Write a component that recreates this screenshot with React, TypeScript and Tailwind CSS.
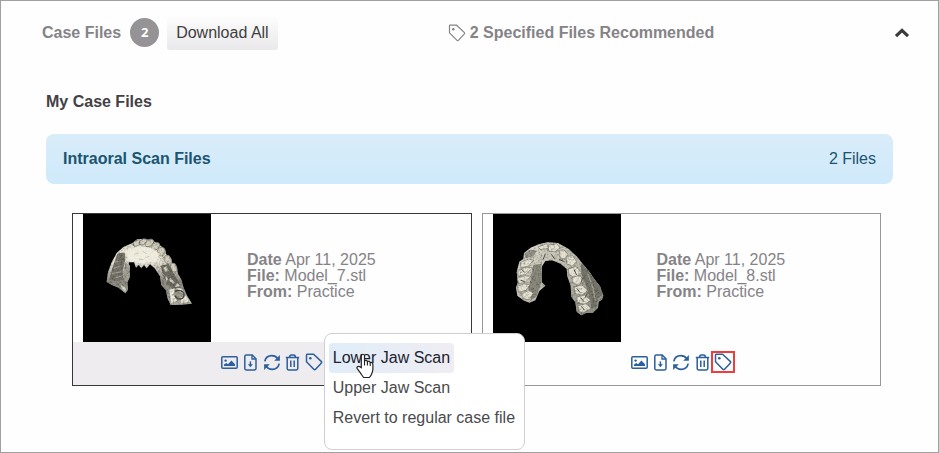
import type { ReactNode } from "react";

function TagIcon({ weight }: { weight: number }) {
  return (
    <svg viewBox="0 0 18 18" className="size-[18px] shrink-0" aria-hidden="true" fill="none" stroke="currentColor" strokeWidth={weight} strokeLinejoin="round">
      <path d="M2.2 1.2H8.6L16.2 8.4C16.8 9 16.8 9.6 16.2 10.2L10.6 16.2C10 16.8 9.4 16.8 8.8 16.2L1.5 8.8V2Q1.5 1.2 2.2 1.2Z" />
      <circle cx="5.3" cy="5.2" r="1.3" fill="currentColor" stroke="none" />
    </svg>
  );
}

function PictureIcon() {
  return (
    <svg viewBox="0 0 17 13" className="h-[13px] w-[17px]" aria-hidden="true">
      <rect x="0.8" y="0.8" width="15.4" height="11.4" rx="1" fill="none" stroke="currentColor" strokeWidth="1.5" />
      <circle cx="4.6" cy="4.6" r="1.2" fill="currentColor" />
      <path d="M3 10V8.6L5.4 7 7 8.2 10.4 4.6 14 8.2V10Z" fill="currentColor" />
    </svg>
  );
}

function FileDownIcon() {
  return (
    <svg viewBox="0 0 13 17" className="h-[17px] w-[13px]" aria-hidden="true" fill="none" stroke="currentColor" strokeWidth="1.5">
      <path d="M2.2 1H8.2L12 4.8V14.6A1.4 1.4 0 0 1 10.6 16H2.2A1.4 1.4 0 0 1 .8 14.6V2.4A1.4 1.4 0 0 1 2.2 1Z" />
      <path d="M8 1V5H12" strokeWidth="1.3" />
      <path d="M6.4 7.4V11" />
      <path d="M3.9 10.2H8.9L6.4 13.2Z" fill="currentColor" stroke="none" />
    </svg>
  );
}

function SyncIcon() {
  return (
    <svg viewBox="0 0 18 17" className="h-[17px] w-[18px] shrink-0" aria-hidden="true" fill="none" stroke="currentColor" strokeWidth="1.7">
      <path d="M1.8 7.4C2.6 3.8 5.6 1.7 8.8 1.7C11.4 1.7 13.5 2.8 14.9 4.8" />
      <path d="M16.2 9.6C15.4 13.2 12.4 15.3 9.2 15.3C6.6 15.3 4.5 14.2 3.1 12.2" />
      <path d="M16.9 1V6.7H11.2Z" fill="currentColor" stroke="none" />
      <path d="M1.1 16V10.3H6.8Z" fill="currentColor" stroke="none" />
    </svg>
  );
}

function TrashIcon() {
  return (
    <svg viewBox="0 0 15 17" className="h-[17px] w-[15px]" aria-hidden="true" fill="none" stroke="currentColor" strokeWidth="1.5">
      <path d="M.8 3.5H14.2" />
      <path d="M4.6 3.3C4.6 1.8 5.4 1 6.4 1H8.6C9.6 1 10.4 1.8 10.4 3.3" />
      <path d="M2.2 3.8V14.6A1.4 1.4 0 0 0 3.6 16H11.4A1.4 1.4 0 0 0 12.8 14.6V3.8" />
      <path d="M5.8 6.4V13M9.2 6.4V13" />
    </svg>
  );
}

function ChevronUp() {
  return (
    <svg viewBox="0 0 16 10" className="h-[10px] w-4" aria-hidden="true">
      <path d="M2 8.2 8 2.4 14 8.2" fill="none" stroke="currentColor" strokeWidth="3.2" />
    </svg>
  );
}

function HandCursor() {
  return (
    <svg viewBox="0 0 18 26" className="pointer-events-none absolute left-[31px] top-[19px] h-[26px] w-[18px]" aria-hidden="true">
      <path
        d="M5.3 14.8V3.2C5.3 .6 8.5 .6 8.5 3.2V8.2C9.2 7 11.2 7.2 11.4 8.8 12.3 7.8 14 8.2 14.2 9.7 15.4 9 16.9 9.9 16.9 11.4V16C16.9 19 15.8 20 15 22.4L13.4 24.5H7.6L5.8 22C4.4 19.6 2.7 17.6 1.2 15.6 .4 14.2 1.9 12.8 3.4 13.5Z"
        fill="#fff"
        stroke="#222"
        strokeWidth="1.2"
        strokeLinejoin="round"
      />
      <path d="M8.5 8V12.5M11.4 9V12.5M14.2 10V13" fill="none" stroke="#222" strokeWidth="1.1" />
    </svg>
  );
}

/* Mottled plaster surface shared by both scan models. */
function Plaster({ id }: { id: string }) {
  return (
    <filter id={id} x="0" y="0" width="1" height="1">
      <feTurbulence type="fractalNoise" baseFrequency="0.16" numOctaves="2" seed="4" result="noise" />
      <feColorMatrix in="noise" type="matrix" values="1.4 0 0 0 0.2  1.4 0 0 0 0.2  1.4 0 0 0 0.2  0 0 0 0 1" result="grain" />
      <feBlend in="SourceGraphic" in2="grain" mode="multiply" result="mixed" />
      <feComposite in="mixed" in2="SourceGraphic" operator="in" />
    </filter>
  );
}

function UpperArch() {
  return (
    <svg viewBox="69 41 384 384" className="size-32 shrink-0 bg-black" role="img" aria-label="Scan model 7">
      <defs>
        <Plaster id="plasterA" />
        <linearGradient id="archA" x1="0" y1="0" x2="0" y2="1">
          <stop offset="0" stopColor="#dedbca" />
          <stop offset="0.35" stopColor="#e8e5d6" />
          <stop offset="0.65" stopColor="#8d8b80" />
          <stop offset="1" stopColor="#aeaca0" />
        </linearGradient>
      </defs>
      <g filter="url(#plasterA)">
        <path
          d="M140 245 144 216 155 186 170 158 190 140 218 128 232 117 250 116 276 120 296 132 314 146 318 162 332 172 336 190 350 200 354 220 364 238 370 260 380 284 396 310 362 313 332 314 322 292 318 270 304 254 300 228 284 204 270 192 260 204 252 194 244 204 236 194 228 202 222 186 206 186 210 230 202 246 204 268 196 279 176 262 156 254Z"
          fill="url(#archA)"
        />
        <path d="M172 160 194 154 196 178 188 212 190 238 174 242 148 240 156 206Z" fill="#77756b" />
        <path d="M196 184 210 196 206 234 198 250 190 216Z" fill="#a5a397" />
        <g fill="#d3d0bf" stroke="#77756a" strokeWidth="2">
          <ellipse cx="231" cy="128" rx="13" ry="8" transform="rotate(-28 231 128)" />
          <ellipse cx="249" cy="125" rx="12" ry="8" transform="rotate(-25 249 125)" />
          <ellipse cx="268" cy="128" rx="14" ry="9" transform="rotate(-32 268 128)" />
          <ellipse cx="286" cy="138" rx="14" ry="10" transform="rotate(-34 286 138)" />
          <ellipse cx="304" cy="154" rx="12" ry="13" />
          <ellipse cx="323" cy="178" rx="10" ry="14" transform="rotate(-24 323 178)" />
          <ellipse cx="341" cy="202" rx="9" ry="14" transform="rotate(-18 341 202)" />
        </g>
        <path d="M302 196 326 190 340 218 354 240 364 264 338 266 320 250 308 224Z" fill="#6f6d63" />
        <path d="M310 202 320 198 326 212 316 214ZM330 232 344 246 340 250 328 242ZM316 224 324 236 318 246ZM344 260 352 248 362 258Z" fill="#d0cec0" />
        <g fill="#eceadb">
          <path d="M328 268 344 264 340 284 352 302 334 308ZM362 292 378 286 390 304 364 308ZM348 264 366 264 372 280 360 274Z" />
          <path d="M182 254 198 262 196 274 186 266Z" opacity="0.7" />
        </g>
        <path d="M346 274C356 266 374 272 372 286S350 298 346 286" fill="none" stroke="#4b4a42" strokeWidth="4" />
        <path d="M164 186 178 182M160 204 180 198M156 220 184 214M166 232 188 226M202 196 194 206M206 212 196 220M290 196 306 208M306 172 318 184M300 214 316 228" stroke="#a6a497" strokeWidth="3" fill="none" />
      </g>
      <path d="M180 156 206 146 240 138 276 144 298 160 290 184 268 184 246 190 206 182 198 158Z" fill="#f3f0e2" opacity="0.8" />
      <path d="M222 162 236 158M248 154 260 160M256 172 268 168M236 176 250 178" fill="none" stroke="#b9b7a6" strokeWidth="2" />
    </svg>
  );
}

function LowerArch() {
  return (
    <svg viewBox="39 41 384 384" className="size-32 shrink-0 bg-black" role="img" aria-label="Scan model 8">
      <defs>
        <Plaster id="plasterB" />
        <linearGradient id="archB" x1="0" y1="0" x2="1" y2="1">
          <stop offset="0" stopColor="#e0decf" />
          <stop offset="0.55" stopColor="#b9b7a9" />
          <stop offset="1" stopColor="#8a897d" />
        </linearGradient>
      </defs>
      <g filter="url(#plasterB)">
        <path
          d="M110 216 118 184 130 176 132 158 152 142 176 132 202 126 234 128 266 146 290 168 306 188 326 212 344 238 360 258 370 286 366 298 356 304 354 322 338 338 318 338 304 345 290 334 286 306 274 290 272 256 262 228 260 206 242 190 216 180 196 182 186 198 184 244 196 256 178 272 166 300 148 307 130 300 112 286 108 262 114 244Z"
          fill="url(#archB)"
        />
        <path d="M302 188 326 212 344 238 360 260 366 284 352 296 350 318 334 326 330 292 316 252 304 222Z" fill="#77766b" />
        <path d="M160 194 184 190 186 242 168 290 154 298 146 266Z" fill="#8b897d" />
        <g fill="#e6e3d4" stroke="#7c7a6f" strokeWidth="2">
          <path d="M174 140 200 130 208 144 182 148Z" />
          <path d="M204 134 230 130 240 142 226 154 206 152Z" />
          <path d="M238 150 252 148 264 162 254 176 240 172Z" />
          <path d="M260 168 278 166 290 184 276 198 260 190Z" />
          <path d="M264 206 288 198 304 216 286 232 268 224Z" />
          <path d="M276 232 300 224 312 244 296 254 278 248Z" />
          <path d="M282 260 306 254 324 270 306 284 286 280Z" />
          <path d="M290 290 314 284 332 300 314 312 292 306Z" />
          <path d="M294 316 318 310 334 324 312 336 298 334Z" />
          <path d="M134 160 152 150 168 152 160 166 138 172Z" fill="#96958c" />
          <path d="M122 186 146 176 162 180 144 198 122 202Z" />
          <path d="M114 210 138 200 158 202 138 222 114 228Z" />
          <path d="M112 234 136 226 152 228 136 246 116 250Z" />
          <path d="M112 258 132 250 150 254 138 270 116 276Z" />
          <path d="M124 282 146 270 160 278 148 298 132 296Z" />
        </g>
        <path d="M124 206 134 216M122 240 134 244M282 208 290 224M290 264 300 276M302 292 312 304M304 318 314 330M308 232 302 250M322 280 314 294M196 160 190 176M214 162 224 176M238 178 254 184" fill="none" stroke="#55544a" strokeWidth="3" />
        <path d="M324 222 338 260 346 300" fill="none" stroke="#a3a194" strokeWidth="4" />
      </g>
    </svg>
  );
}

function IconButton({ label, flagged, children }: { label: string; flagged?: boolean; children: ReactNode }) {
  return (
    <button
      type="button"
      aria-label={label}
      className={
        flagged
          ? "-mx-0.5 flex h-[22px] w-6 items-center justify-center border-2 border-[#f03c3c]"
          : "flex h-[22px] w-5 items-center justify-center"
      }
    >
      {children}
    </button>
  );
}

const menuItems = ["Lower Jaw Scan", "Upper Jaw Scan", "Revert to regular case file"];

function TagMenu() {
  return (
    <ul className="absolute left-full top-[-18px] z-10 h-[117px] w-[201px] rounded-lg border border-[#d0d0d4] bg-white px-1 py-[9px] text-[#4a4a4c]">
      {menuItems.map((item, i) => (
        <li key={item}>
          <button
            type="button"
            className={
              i === 0
                ? "flex h-[30px] items-center whitespace-nowrap rounded-sm bg-linear-to-r from-[#e0edf8] to-[#efedf3] px-1 text-[#1c2230]"
                : "flex h-[30px] items-center whitespace-nowrap px-1"
            }
          >
            {item}
          </button>
        </li>
      ))}
      <li aria-hidden="true"><HandCursor /></li>
    </ul>
  );
}

interface CardProps {
  file: string;
  active?: boolean;
  children: ReactNode;
}

function FileCard({ file, active, children }: CardProps) {
  return (
    <article className={active ? "border border-[#38383a]" : "border border-[#98989a]"}>
      <div className="flex items-center gap-9 pl-[10px]">
        {children}
        <div className="pb-1 leading-4 text-[#858387]">
          <p><b>Date</b> Apr 11, 2025</p>
          <p><b>File:</b> {file}</p>
          <p><b>From:</b> Practice</p>
        </div>
      </div>
      <div className={active ? "flex h-[43px] justify-center bg-[#eeecef] pt-[9px]" : "flex h-[43px] justify-center pt-[9px]"}>
        <div className="relative flex h-[22px] gap-px text-[#2b5f9e]">
          <IconButton label="Preview"><PictureIcon /></IconButton>
          <IconButton label="Download"><FileDownIcon /></IconButton>
          <IconButton label="Replace"><SyncIcon /></IconButton>
          <IconButton label="Delete"><TrashIcon /></IconButton>
          <IconButton label="Tag" flagged={!active}><TagIcon weight={1.5} /></IconButton>
          {active && <TagMenu />}
        </div>
      </div>
    </article>
  );
}

export default function App() {
  return (
    <main className="min-h-screen border border-[#a09fa1] bg-[#fefefe] pb-4 font-['Liberation_Sans',Arial,sans-serif] text-base">
      <header className="grid grid-cols-[10fr_11fr_auto] items-center pl-[41px] pr-7 pt-[14px] font-bold text-[#858387]">
        <div className="flex items-center">
          <h1>Case Files</h1>
          <span className="ml-[9px] flex size-[29px] items-center justify-center rounded-full bg-[#959395] font-['Open_Sans',sans-serif] text-[13px] text-white">2</span>
          <button type="button" className="ml-2 h-[35px] rounded-[3px] bg-linear-to-b from-[#fefefe] to-[#e9e8ea] px-[9px] font-normal text-[#3f3e41]">Download All</button>
        </div>
        <p className="flex items-center gap-1">
          <TagIcon weight={1.2} />
          2 Specified Files Recommended
        </p>
        <button type="button" aria-label="Collapse" className="text-[#3b3a3d]"><ChevronUp /></button>
      </header>

      <section className="mx-[45px] mt-10">
        <h2 className="font-bold text-[#434144]">My Case Files</h2>
        <div className="mt-5 flex h-[50px] items-center justify-between rounded-lg bg-linear-to-b from-[#d9ecf9] to-[#cfeafb] px-[17px] text-[#1b5470]">
          <h3 className="font-bold">Intraoral Scan Files</h3>
          <span>2 Files</span>
        </div>
        <div className="ml-[26px] mr-3 mt-[29px] grid grid-cols-2 gap-[10px]">
          <FileCard file="Model_7.stl" active><UpperArch /></FileCard>
          <FileCard file="Model_8.stl"><LowerArch /></FileCard>
        </div>
      </section>
    </main>
  );
}
